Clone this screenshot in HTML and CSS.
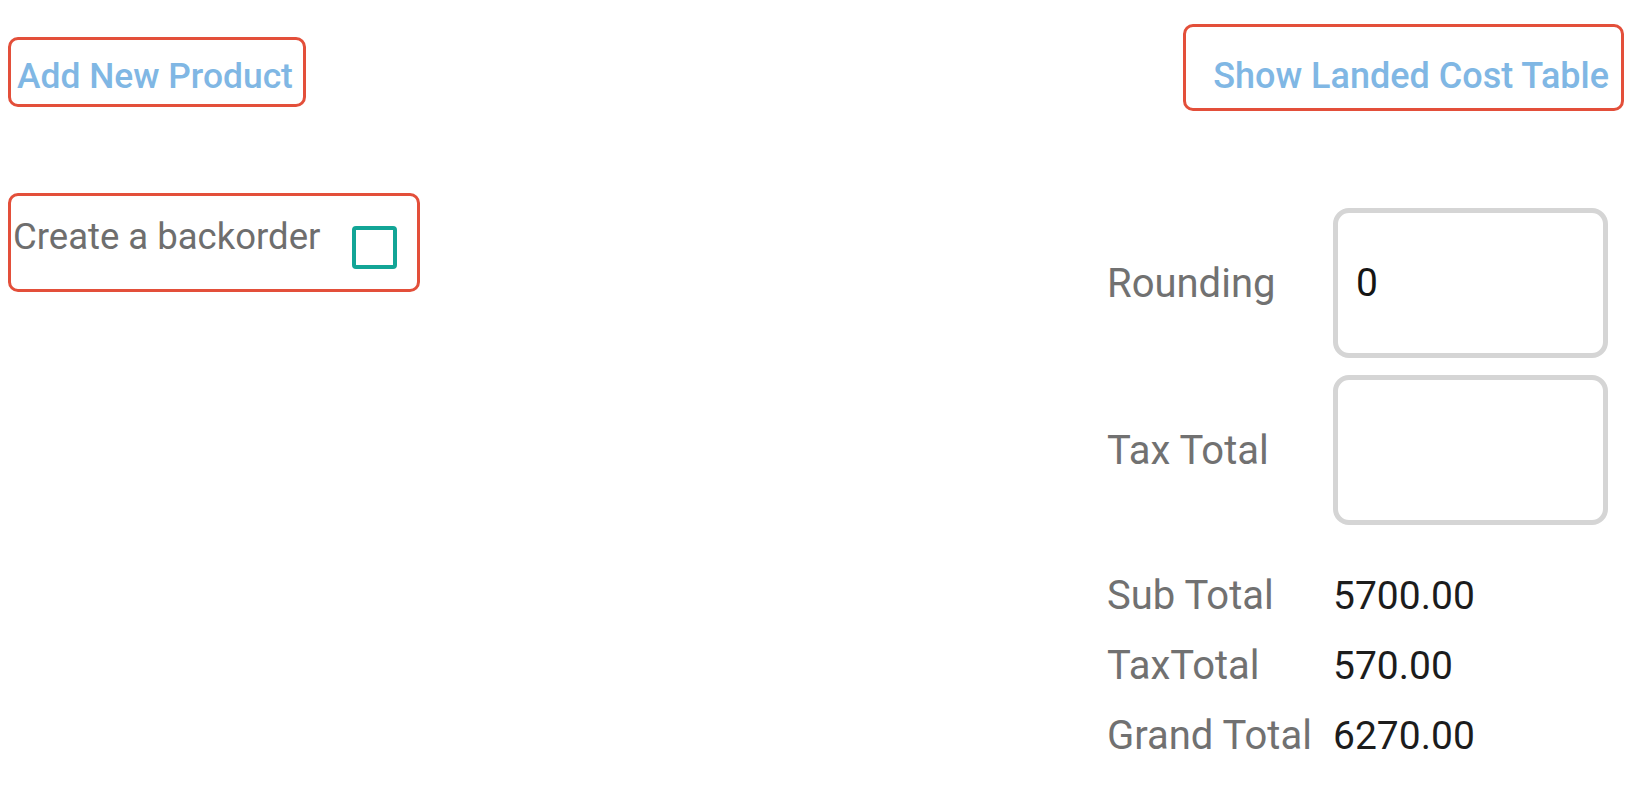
FILE: index.html
```html
<!DOCTYPE html>
<html lang="en">
<head>
    <meta charset="UTF-8">
    <meta name="viewport" content="width=device-width, initial-scale=1.0">
    <title>Purchase Totals</title>
    <link rel="stylesheet" href="styles.css">
</head>
<body>
    <div class="page">
        <div class="col-left">
            <a href="#" class="link-box add-link">Add New Product</a>
            <label class="backorder-box">
                <span class="backorder-text">Create a backorder</span>
                <span class="checkbox"></span>
            </label>
        </div>

        <div class="col-right">
            <a href="#" class="link-box landed-link">Show Landed Cost Table</a>

            <div class="totals">
                <div class="field-row">
                    <span class="label">Rounding</span>
                    <div class="input-box">0</div>
                </div>
                <div class="field-row">
                    <span class="label">Tax Total</span>
                    <div class="input-box"></div>
                </div>

                <div class="summary">
                    <div class="summary-row">
                        <span class="label">Sub Total</span>
                        <span class="value">5700.00</span>
                    </div>
                    <div class="summary-row">
                        <span class="label">TaxTotal</span>
                        <span class="value">570.00</span>
                    </div>
                    <div class="summary-row">
                        <span class="label">Grand Total</span>
                        <span class="value">6270.00</span>
                    </div>
                </div>
            </div>
        </div>
    </div>
</body>
</html>
```

FILE: styles.css
```css
* {
  margin: 0;
  padding: 0;
  box-sizing: border-box;
}
body {
  font-family: Roboto, "Liberation Sans", Arial, sans-serif;
  background-color: #fff;
  color: #717171;
}
.page {
  display: flex;
  justify-content: space-between;
  align-items: flex-start;
  padding: 24px 8px 0 8px;
}

/* red outlined boxes */
.link-box,
.backorder-box {
  border: 3px solid #e34f3a;
  border-radius: 10px;
}
.link-box {
  display: block;
  text-decoration: none;
  color: #80b7e4;
  font-size: 36px;
  font-weight: 500;
  line-height: 40px;
}

/* left column */
.col-left {
  display: flex;
  flex-direction: column;
  align-items: flex-start;
  padding-top: 13px;
}
.add-link {
  padding: 16px 10px 8px 6px;
  font-size: 35.4px;
}
.backorder-box {
  margin-top: 86px;
  display: flex;
  align-items: flex-start;
  padding: 20px 20px 20px 2px;
  font-size: 36.5px;
  line-height: 42px;
  color: #6e6e6e;
}
.checkbox {
  width: 45px;
  height: 43px;
  margin-top: 10px;
  margin-left: 32px;
  border: 4px solid #12a596;
  border-radius: 4px;
}

/* right column */
.col-right {
  display: flex;
  flex-direction: column;
  align-items: flex-end;
}
.landed-link {
  padding: 29px 12px 12px 27px;
}
.totals {
  margin-top: 97px;
  padding-right: 16px;
  display: flex;
  flex-direction: column;
  font-size: 39px;
}
.field-row,
.summary-row {
  display: grid;
  grid-template-columns: 226px 275px;
  align-items: center;
}
.field-row + .field-row {
  margin-top: 17px;
}
.input-box {
  height: 150px;
  border: 5px solid #d5d5d5;
  border-radius: 16px;
  padding-left: 18px;
  display: flex;
  align-items: center;
  color: #151515;
}
.summary {
  margin-top: 36px;
}
.summary-row {
  line-height: 70px;
}
.label {
  color: #717171;
  font-size: 40px;
  white-space: nowrap;
}
.value {
  color: #1c1c1c;
}
```
